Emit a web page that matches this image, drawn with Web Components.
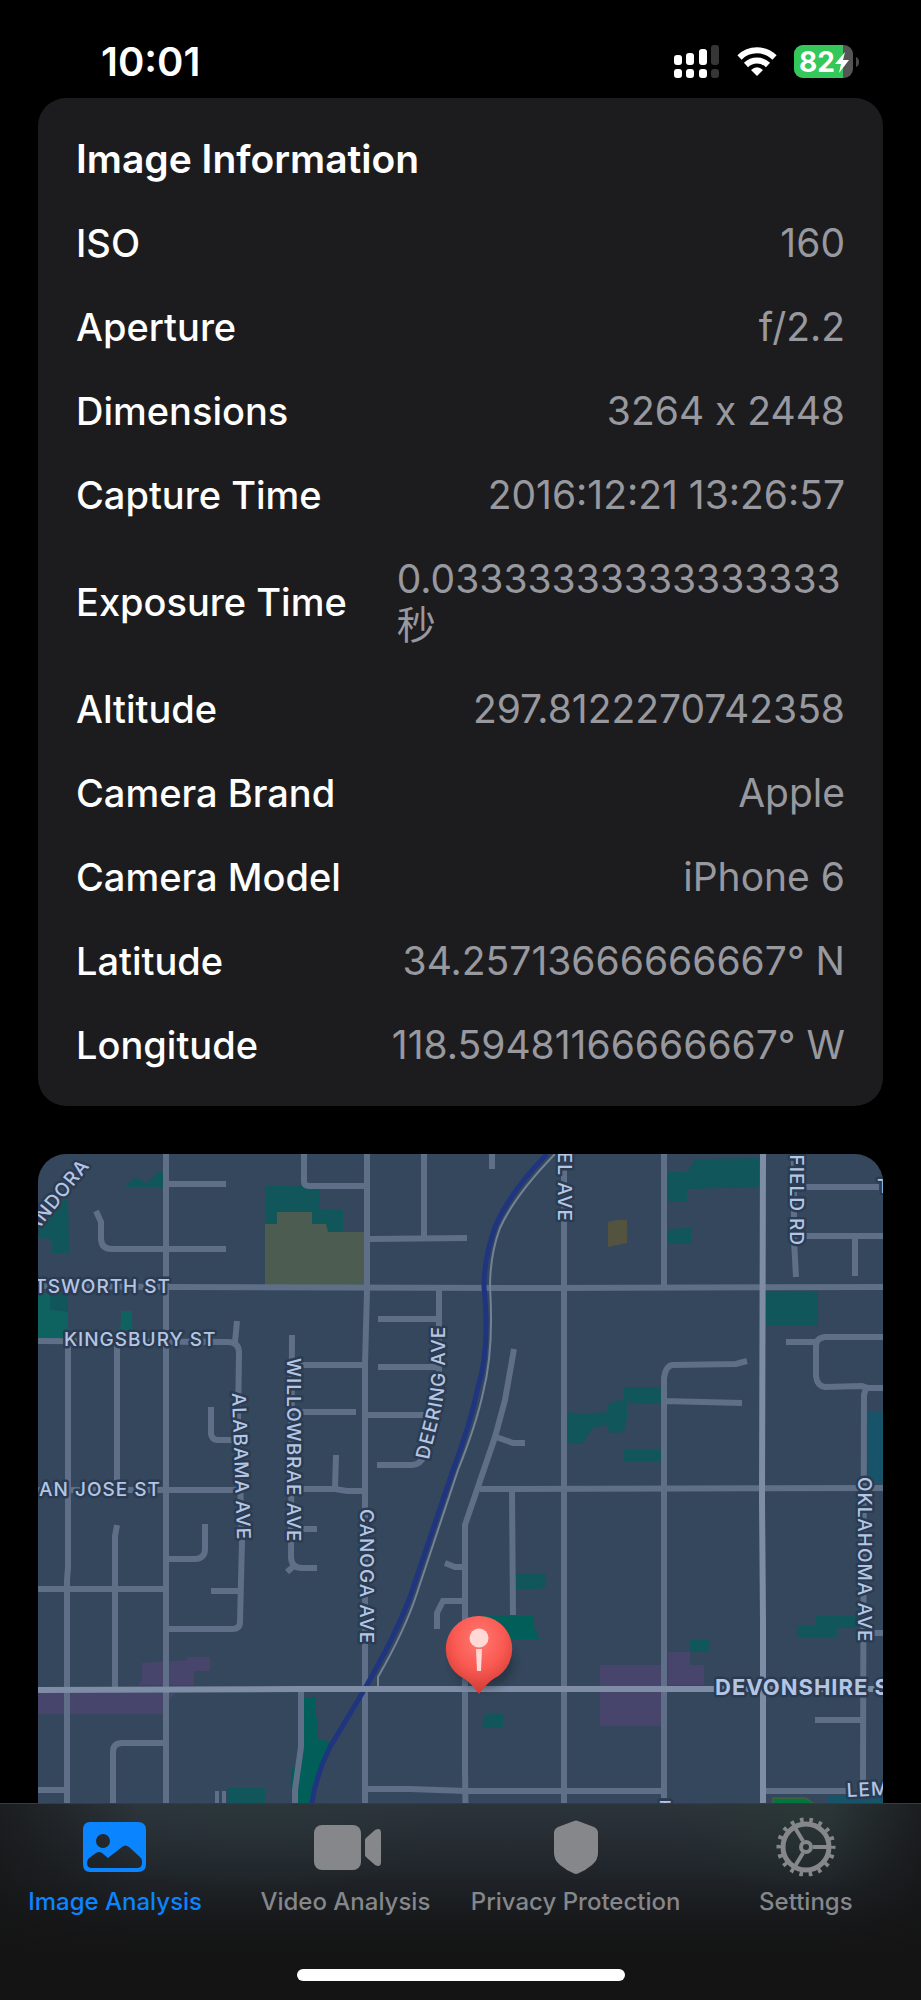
<!DOCTYPE html>
<html lang="en">
<head>
<meta charset="utf-8">
<meta name="viewport" content="width=device-width, initial-scale=1">
<title>Image Analysis</title>
<style>
  html, body { margin: 0; height: 100%; background: #000; }
  body { font-family: Inter, "Noto Sans CJK SC", sans-serif; color: #fff; }
</style>
</head>
<body>
<analysis-app></analysis-app>

<template id="t-app">
  <style>
    :host { display: flex; flex-direction: column; height: 100vh; background: #000; }
    main { flex: 1; min-height: 0; overflow-y: auto; scrollbar-width: none; padding: 0 38px; display: flex; flex-direction: column; gap: 48px; }
  </style>
  <status-bar></status-bar>
  <main>
    <info-card>
      <span slot="title">Image Information</span>
      <info-row><span slot="label">ISO</span>160</info-row>
      <info-row literal><span slot="label">Aperture</span>f/2.2</info-row>
      <info-row literal><span slot="label">Dimensions</span>3264 x 2448</info-row>
      <info-row><span slot="label">Capture Time</span>2016:12:21 13:26:57</info-row>
      <info-row><span slot="label">Exposure Time</span>0.03333333333333333秒</info-row>
      <info-row><span slot="label">Altitude</span>297.8122270742358</info-row>
      <info-row><span slot="label">Camera Brand</span>Apple</info-row>
      <info-row><span slot="label">Camera Model</span>iPhone 6</info-row>
      <info-row><span slot="label">Latitude</span>34.25713666666667° N</info-row>
      <info-row><span slot="label">Longitude</span>118.59481166666667° W</info-row>
    </info-card>
    <location-map></location-map>
  </main>
  <tab-bar>
    <tab-item active>
      <svg slot="icon" viewBox="0 0 68 60" aria-hidden="true"><path fill="currentColor" fill-rule="evenodd" d="M9 5H57Q65 5 65 13V47Q65 55 57 55H9Q2 55 2 47V13Q2 5 9 5ZM22 17A7 7 0 1 0 22 31A7 7 0 1 0 22 17ZM6 46Q6 43 8 41L15 36Q18 34 21 36L27 41L41 30Q44 27 48 30L59 40Q61 42 61 44V46Q61 51 56 51H11Q6 51 6 46Z"/></svg>
      Image Analysis
    </tab-item>
    <tab-item>
      <svg slot="icon" viewBox="0 0 68 60" aria-hidden="true"><g fill="currentColor"><rect x="3" y="8" width="47" height="45" rx="8"/><path d="M54 23Q54 22 55 21L64 13Q70 10 70 16V45Q70 51 64 48L55 40Q54 39 54 38Z"/></g></svg>
      Video Analysis
    </tab-item>
    <tab-item>
      <svg slot="icon" viewBox="0 0 68 60" aria-hidden="true"><path fill="currentColor" d="M32 4Q34 3 36 4L52 10Q56 12 56 16V36Q56 43 50 48Q44 53 37 56Q34 58 31 56Q24 53 18 48Q12 43 12 36V16Q12 12 16 10Z"/></svg>
      Privacy Protection
    </tab-item>
    <tab-item>
      <svg slot="icon" viewBox="0 0 68 60" aria-hidden="true"><g fill="none" stroke="currentColor"><circle cx="34" cy="30" r="23" stroke-width="5"/><circle cx="34" cy="30" r="27" stroke-width="5" stroke-dasharray="3.6 5.824" stroke-dashoffset="1.8"/><circle cx="34" cy="30" r="5" stroke-width="4"/><path stroke-width="4" d="M41 30H56M31 24L22.500 10M31 36L22.500 50"/></g></svg>
      Settings
    </tab-item>
  </tab-bar>
</template>

<template id="t-status">
  <style>
    :host { display: flex; flex: none; height: 98px; box-sizing: border-box; padding: 38px 60px 12px 101px; align-items: center; justify-content: space-between; }
    time { font-size: 40px; line-height: 48px; font-weight: 600; }
    .icons { display: flex; align-items: center; gap: 17px; }
    svg { display: block; height: 34px; }
    text { font: 700 28px Inter, sans-serif; fill: #fff; }
  </style>
  <time>10:01</time>
  <div class="icons">
    <svg width="47" height="34" viewBox="0 0 47 34" role="img" aria-label="Signal"><g fill="#fff"><rect x="1" y="10" width="8" height="10" rx="3"/><rect x="13" y="8" width="8" height="12" rx="3"/><rect x="26" y="4" width="8" height="16" rx="3"/><rect x="1" y="24" width="8" height="9" rx="3"/><rect x="13" y="24" width="8" height="9" rx="3"/><rect x="26" y="24" width="8" height="9" rx="3"/></g><g fill="#363636"><rect x="38" y="0" width="8" height="20" rx="3"/><rect x="38" y="24" width="8" height="9" rx="3"/></g></svg>
    <svg width="40" height="34" viewBox="0 0 40 34" role="img" aria-label="Wi-Fi"><g fill="none" stroke="#fff" stroke-width="6"><path d="M2.500 12.500A25 25 0 0 1 37.500 12.500"/><path d="M9 20A16 16 0 0 1 31 20"/></g><path fill="#fff" d="M14 25Q20 19.500 26 25L20 31Z"/></svg>
    <svg width="67" height="34" viewBox="0 0 67 34" role="img" aria-label="Battery 82 percent, charging"><defs><clipPath id="b"><rect y="0" width="59" height="33" rx="9"/></clipPath></defs><g clip-path="url(#b)"><rect width="59" height="33" fill="#555"/><rect width="49" height="33" fill="#34c759"/></g><path d="M62 12Q65 13 65 17Q65 21 62 22Z" fill="#4a4a4a"/><text x="5" y="27">82</text><path d="M51 7L41 19H47L45 28L55 15H49Z" fill="#fff"/></svg>
  </div>
</template>

<template id="t-card">
  <style>
    :host { display: flex; flex: none; flex-direction: column; gap: 38px; padding: 38px; background: #1c1c1e; border-radius: 28px; }
    h2 { margin: 0; font-size: 39px; line-height: 46px; font-weight: 600; }
  </style>
  <h2><slot name="title"></slot></h2>
  <slot></slot>
</template>

<template id="t-row">
  <style>
    :host { display: flex; align-items: center; justify-content: space-between; gap: 50px; line-height: 46px; }
    :host([literal]) { font-variant-ligatures: no-contextual; }
    .label { flex: none; font-size: 38px; font-weight: 500; color: #fff; }
    .value { font-size: 39px; font-weight: 400; color: #98989f; }
  </style>
  <div class="label"><slot name="label"></slot></div>
  <div class="value"><slot></slot></div>
</template>

<template id="t-map">
  <style>
    :host { display: block; flex: none; height: 690px; border-radius: 28px; overflow: hidden; background: #35475c; }
    svg { display: block; width: 100%; height: 100%; }
    .minor { fill: none; stroke: #5e6f87; stroke-width: 6; }
    .major { fill: none; stroke: #7e8ca6; stroke-width: 6; }
    .park { fill: #10565a; }
    .park2 { fill: #0e625f; }
    .shop { fill: #48456c; }
    text { font: 500 19px Inter, sans-serif; letter-spacing: 1px; fill: #b4c6e4; stroke: #2b3b51; stroke-width: 5px; stroke-linejoin: round; paint-order: stroke; }
    text.big { font-size: 22px; font-weight: 700; }
  </style>
  <svg viewBox="38 1154 845 690" preserveAspectRatio="xMidYMin slice" role="img" aria-label="Map of the place where the photo was taken">
    <defs>
      <radialGradient id="pin" cx="0.5" cy="0.3" r="0.75"><stop offset="0" stop-color="#ff7a72"/><stop offset="0.5" stop-color="#fa5a52"/><stop offset="1" stop-color="#c8352d"/></radialGradient>
      <filter id="shade" x="-50%" y="-50%" width="200%" height="200%"><feGaussianBlur stdDeviation="4"/></filter>
      <path id="deering" d="M429 1460C433 1435 445 1410 445 1370V1300"/>
    </defs>
    <g class="park">
      <path d="M125 1187L135 1177L147 1183L158 1172H163V1187Z"/>
      <path d="M68 1197L69 1253H52V1240L38 1237V1225Z"/>
      <path d="M265 1186H310L320 1190V1209L343 1210V1232H265Z"/>
      <path d="M668 1172H687L695 1159L759 1158V1187L687 1189V1202H668Z"/>
      <path d="M668 1229L691 1228V1244H668ZM766 1291H818V1326H766Z"/>
      <path d="M567 1412L580 1414L607 1412L609 1403L624 1400V1387H661V1404H645L627 1402V1417L624 1432L609 1433L607 1425L593 1428L582 1444L567 1443ZM624 1450H661V1461H624Z"/>
      <path d="M516 1573H546V1586L540 1589H516ZM690 1640H710V1652H690ZM485 1714H503V1728H482ZM816 1616H857V1628H837V1637H797V1626H816Z"/>
      <path d="M227 1788H265V1844H227Z"/>
    </g>
    <g class="park2">
      <path d="M38 1293H50V1310L68 1311V1325L70 1338H38ZM121 1311H132V1325L134 1330H118L121 1325Z"/>
      <path class="park" d="M50 1293H68V1312L50 1309Z"/>
    </g>
    <path fill="#015e58" d="M478 1616H534V1626L539 1639H478ZM304 1697H316V1718H318V1739L331 1742L320 1770L310 1803V1844H291V1767H300Z"/>
    <path fill="#4c5c50" d="M265 1224H277V1212H312V1224H326L328 1232H364V1285H265Z"/>
    <path fill="#54533f" d="M608 1222L616 1220H627V1243L608 1247Z"/>
    <path fill="#17546a" d="M868 1412H883V1483H868ZM827 1795H883V1844H827Z"/>
    <path fill="#00753f" stroke="#6b5a32" d="M773 1798H806L814 1804V1844H773Z"/>
    <g class="shop">
      <path d="M38 1693H176L169 1700H163V1714H38ZM142 1663L187 1660V1657H210V1671H194V1685H138L142 1680Z"/>
      <path d="M600 1665H661V1726H600ZM668 1652H690V1665H704V1685H668Z"/>
    </g>
    <g class="minor">
      <path d="M166 1154V1844M367 1154V1290L365 1365V1844M304 1154V1181Q304 1186 309 1186H366M166 1184H226M96 1211L101 1222V1238Q101 1249 112 1249H226M424 1154V1238M370 1239L467 1238"/>
      <path d="M38 1286L170 1287L550 1288L883 1287M38 1341L228 1342Q239 1342 239 1353L238 1420L242 1540L240 1622Q240 1629 232 1629H168M237 1321L235 1342"/>
      <path d="M68 1341V1567L67 1580V1844M117 1341V1480M117 1525L115 1536V1688M211 1407V1434Q212 1440 218 1440H232M292 1335L291 1558Q292 1568 302 1568H317M295 1565L287 1572"/>
      <path d="M300 1365H366M300 1412H356M439 1290V1385L424 1456Q420 1465 412 1465H377M378 1319H440M378 1367H440M366 1415H432M336 1455L335 1488M300 1489H335L347 1491H365"/>
      <path d="M38 1490H242M38 1589H166M168 1559H196Q205 1558 205 1549V1524M211 1591H240M302 1529H317M163 1743H122Q113 1743 113 1752V1844M38 1790H67M301 1692V1747L295 1790V1844"/>
      <path d="M492 1154V1169M564 1154V1844M664 1154V1287M747 1361L736 1364L673 1365Q666 1365 664 1378V1798M664 1401L742 1403M794 1154V1240L796 1277M805 1187H879M805 1236H883M855 1236V1276"/>
      <path d="M786 1342H816M883 1337H825Q816 1338 816 1346V1376Q817 1386 825 1387L862 1386L868 1388H883M866 1388L864 1395L863 1780M514 1349L505 1400L495 1437L465 1525V1770L466 1844M496 1437L513 1443H525"/>
      <path d="M480 1489L883 1488M512 1490L513 1615M365 1789H410L466 1791H664M766 1791H848M815 1720H863M874 1633H883M445 1563L455 1567H463M437 1629V1613L443 1601H463"/>
      <path stroke-width="4" d="M217 1791V1844M224 1791V1844"/>
    </g>
    <path fill="none" stroke="#20357f" stroke-width="5" d="M547 1154Q510 1192 495 1227Q484 1258 484 1287Q490 1350 478 1387Q470 1425 453 1470L410 1597Q395 1637 360 1697L330 1747Q316 1775 312 1803V1844"/>
    <path fill="none" stroke="#748296" stroke-width="2" d="M555 1154Q515 1195 500 1228Q490 1255 490 1287Q494 1350 483 1393Q476 1425 458 1470L417 1593Q405 1630 378 1677V1688"/>
    <g class="major"><path d="M38 1690L300 1689H883M763 1154L762 1500L763 1620V1844"/></g>
    <g>
      <text transform="translate(35 1234) rotate(-51)">ANDORA</text>
      <text x="171" y="1293" text-anchor="end">TSWORTH ST</text>
      <text x="64" y="1346">KINGSBURY ST</text>
      <text x="161" y="1496" text-anchor="end">AN JOSE ST</text>
      <text transform="translate(232 1393) rotate(88)">ALABAMA AVE</text>
      <text transform="translate(287 1358) rotate(90)">WILLOWBRAE AVE</text>
      <text transform="translate(360 1509) rotate(90)">CANOGA AVE</text>
      <text><textPath href="#deering">DEERING AVE</textPath></text>
      <text transform="translate(558 1222) rotate(90)" text-anchor="end">EL AVE</text>
      <text transform="translate(790 1246) rotate(90)" text-anchor="end">FIELD RD</text>
      <text transform="translate(858 1477) rotate(90)">OKLAHOMA AVE</text>
      <text class="big" x="715" y="1695">DEVONSHIRE ST</text>
      <text transform="translate(847 1797) rotate(-3)">LEM</text>
      <text x="877" y="1193">T</text>
      <text x="659" y="1815">T</text>
    </g>
    <ellipse cx="483" cy="1662" rx="30" ry="26" fill="#16202c" opacity="0.5" filter="url(#shade)"/>
    <path fill="url(#pin)" d="M479 1616A33 33 0 0 1 494 1678.500Q487 1683 479 1694Q471 1683 464 1678.500A33 33 0 0 1 479 1616Z"/>
    <g fill="#ffd9d6"><circle cx="479" cy="1638" r="9.500"/><path d="M476 1649H482L481 1671H477Z"/></g>
  </svg>
</template>

<template id="t-tabs">
  <style>
    :host { display: flex; flex: none; flex-direction: column; align-items: center; justify-content: space-between; height: 197px; box-sizing: border-box; padding-bottom: 19px; border-top: 1px solid #353b40;
      background: linear-gradient(90deg, #141414b0 0, #14141400 15%, #14141400 90%, #141414b0 100%), radial-gradient(140px 90px at 87% 0, #2a3a3480, #2a3a3400), radial-gradient(200px 90px at 28% 0, #2a3a3c80, #2a3a3c00), linear-gradient(#2c343b, #20252a 35%, #17181a 60%, #141414 78%); }
    nav { display: flex; align-self: stretch; }
    .home { width: 328px; height: 12px; border-radius: 6px; background: #fff; }
  </style>
  <nav aria-label="Sections"><slot></slot></nav>
  <div class="home"></div>
</template>

<template id="t-tab">
  <style>
    :host { display: flex; flex: 1 1 0; min-width: 0; color: #85878a; }
    :host([active]) { color: #0a84ff; }
    button { flex: 1; min-width: 0; display: flex; flex-direction: column; align-items: center; gap: 9px; padding: 13px 0 0; margin: 0; border: 0; background: none; color: inherit; font: 500 24px/32px Inter, sans-serif; white-space: nowrap; }
    ::slotted(svg) { display: block; width: 68px; height: 60px; overflow: visible; }
  </style>
  <button type="button"><slot name="icon"></slot><span><slot></slot></span></button>
</template>

<script>
  const define = (name, id) => customElements.define(name, class extends HTMLElement {
    constructor() {
      super();
      this.attachShadow({ mode: "open" }).append(document.getElementById(id).content.cloneNode(true));
    }
  });
  define("status-bar", "t-status");
  define("info-card", "t-card");
  define("info-row", "t-row");
  define("location-map", "t-map");
  define("tab-bar", "t-tabs");
  define("tab-item", "t-tab");
  define("analysis-app", "t-app");
</script>
</body>
</html>
